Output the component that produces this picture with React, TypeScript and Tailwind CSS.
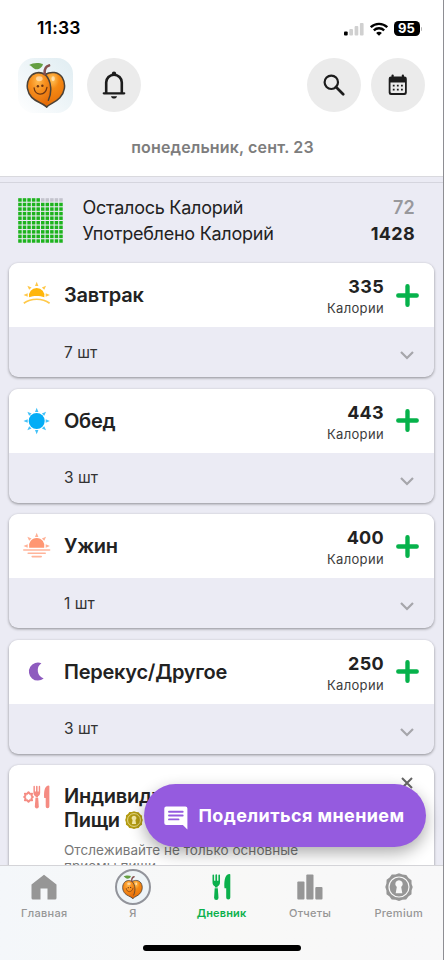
import React from 'react';

type IconProps = { className?: string };

const Peach: React.FC<IconProps> = ({ className }) => (
  <svg viewBox="0 0 42 48" className={className} fill="none">
    <defs>
      <radialGradient id="peachLeft" cx="0.45" cy="0.25" r="0.75">
        <stop offset="0" stopColor="#ffb84d" />
        <stop offset="0.4" stopColor="#f7901e" />
        <stop offset="1" stopColor="#e46a08" />
      </radialGradient>
      <radialGradient id="peachRight" cx="0.5" cy="0.2" r="0.8">
        <stop offset="0" stopColor="#ffc65e" />
        <stop offset="0.35" stopColor="#f58a14" />
        <stop offset="1" stopColor="#e56c06" />
      </radialGradient>
    </defs>
    <path
      d="M20 13C26 9.500 34 10 38 16c4.500 7.500 2.500 16-2.500 21.500C31.500 42 26 43 21.700 47L15 40z"
      fill="url(#peachRight)"
      stroke="#4b4238"
      strokeWidth="1.6"
      strokeLinejoin="round"
    />
    <path
      d="M20 13C13.500 9 6.500 11.500 3.300 17-.5 24 1.500 32 6 37c4.500 4.800 10.500 5.500 15.700 10 .2-2.500.6-4.500 1.800-7 3.500-7 4-20-3.500-27z"
      fill="url(#peachLeft)"
    />
    <path
      d="M23.500 40c3.500-7 4-20-3.500-27C13.500 9 6.500 11.500 3.300 17-.5 24 1.500 32 6 37c4.500 4.800 10.500 5.500 15.700 10"
      stroke="#4b4238"
      strokeWidth="1.6"
      strokeLinecap="round"
      strokeLinejoin="round"
    />
    <path d="M19.500 12.500c-.3-4 .6-8 4.700-9" stroke="#86504e" strokeWidth="2.800" strokeLinecap="round" />
    <path d="M3.300 3C7 .3 14 .2 17.800 2c-.6 3.500-3.500 5.500-6.800 5.500S7 4.500 3.300 3z" fill="#659f42" />
    <ellipse cx="14" cy="17.500" rx="3.500" ry="2.600" fill="#fff" opacity="0.5" />
    <ellipse cx="28.500" cy="17.500" rx="1.800" ry="2.600" fill="#fff" opacity="0.5" />
    <circle cx="12.500" cy="25.300" r="1.300" fill="#703613" />
    <circle cx="17.200" cy="24.900" r="1.300" fill="#703613" />
    <path d="M8.500 27c.8 9 12 8.500 13.500-.5" stroke="#703613" strokeWidth="1.300" strokeLinecap="round" />
  </svg>
);

const RoundButton: React.FC<{ children: React.ReactNode }> = ({ children }) => (
  <button className="flex size-[54px] items-center justify-center rounded-full bg-[#ebebeb] text-[#1c1c1c]">
    {children}
  </button>
);

const StatusBar: React.FC = () => (
  <div className="flex h-[58px] items-center justify-between pr-[21px] pb-px pl-[37px]">
    <span className="text-[17.5px] font-semibold tracking-[0.2px] text-black">11:33</span>
    <div className="flex items-center gap-[6px]">
      <svg width="20" height="14" viewBox="0 0 20 14">
        <rect x="0" y="9.5" width="3.7" height="4" rx="1" fill="#000" />
        <rect x="5.3" y="7" width="3.7" height="6.5" rx="1" fill="#d0d0d0" />
        <rect x="10.6" y="4" width="3.7" height="9.5" rx="1" fill="#d0d0d0" />
        <rect x="15.9" y="1" width="3.7" height="12.5" rx="1" fill="#d0d0d0" />
      </svg>
      <svg width="18" height="14" viewBox="0 0 18 14" fill="none" stroke="#000" strokeWidth="2.3">
        <path d="M.8 5.200c4.600-4.500 11.800-4.500 16.400 0" />
        <path d="M3.800 8.400c3-2.900 7.400-2.900 10.400 0" />
        <path d="M9 13.800l-2.900-2.900c1.500-1.500 4.300-1.500 5.800 0z" fill="#000" stroke="none" />
      </svg>
      <div className="flex items-center gap-px">
        <span className="flex h-[15px] w-[26px] items-center justify-center rounded-[4.5px] bg-black text-[13px] font-bold text-white">
          95
        </span>
        <span className="h-1 w-[1.5px] rounded-r-full bg-[#b5b5b5]" />
      </div>
    </div>
  </div>
);

const Header: React.FC = () => (
  <header className="h-[177px] border-b border-[#d9d9de] bg-white">
    <StatusBar />
    <div className="flex h-[54px] items-center justify-between px-[18px]">
      <div className="flex items-center gap-[14px]">
        <div className="flex size-[55px] items-center justify-center rounded-[16px] bg-gradient-to-bl from-[#e0edf2] via-[#eef5f8] to-white">
          <Peach className="h-[46px] w-[40px]" />
        </div>
        <RoundButton>
          <svg width="24" height="28" viewBox="0 0 24 28" fill="none" stroke="currentColor">
            <path d="M4.200 22V11.500a7.800 7.800 0 0 1 15.600 0V22" strokeWidth="2.6" />
            <path d="M1.800 22.300h20.400" strokeWidth="2.3" strokeLinecap="round" />
            <circle cx="12" cy="2.6" r="2.2" fill="currentColor" stroke="none" />
            <path d="M9 25.200h6c-.4 3.200-5.600 3.200-6 0z" fill="currentColor" stroke="none" />
          </svg>
        </RoundButton>
      </div>
      <div className="flex items-center gap-[10px]">
        <RoundButton>
          <svg width="22" height="22" viewBox="0 0 22 22" fill="none" stroke="currentColor">
            <circle cx="8.3" cy="8.3" r="6.700" strokeWidth="2.2" />
            <path d="M13 13l7.200 7.200" strokeWidth="2.7" strokeLinecap="round" />
          </svg>
        </RoundButton>
        <RoundButton>
          <svg width="20" height="22" viewBox="0 0 20 22" fill="currentColor">
            <rect x="3.5" y="0.5" width="2.2" height="5" rx="1" />
            <rect x="13.8" y="0.5" width="2.2" height="5" rx="1" />
            <path d="M3 2.500h13.500A2.300 2.300 0 0 1 18.800 4.800v13.900a2.300 2.300 0 0 1-2.300 2.300H3A2.300 2.300 0 0 1 .7 18.700V4.800A2.300 2.300 0 0 1 3 2.500z" />
            <path d="M2.500 8.500h14.500v9.200a1.300 1.300 0 0 1-1.300 1.300H3.800a1.300 1.300 0 0 1-1.300-1.300z" fill="#ebebeb" />
            <path d="M4.800 10.800h1.800v1.700h-1.800zM8.900 10.800h1.800v1.700h-1.800zM13 10.800h1.800v1.700h-1.800zM4.800 14.700h1.800v1.700h-1.800zM8.900 14.700h1.800v1.700h-1.800zM13 14.700h1.800v1.700h-1.800z" />
          </svg>
        </RoundButton>
      </div>
    </div>
    <div className="pt-[23px] pl-[2px] text-center text-[16px] leading-6 font-semibold tracking-[0.15px] text-[#7d7d7d]">
      понедельник, сент. 23
    </div>
  </header>
);

const CalorieGrid: React.FC = () => (
  <svg width="45" height="45" viewBox="0 0 45 45">
    {Array.from({ length: 100 }, (_, i) => (
      <rect
        key={i}
        x={(i % 10) * 4.56 + 0.2}
        y={Math.floor(i / 10) * 4.56 + 0.2}
        width="3.5"
        height="3.5"
        fill={i > 4 && i < 10 ? '#c3c3cc' : '#1db31d'}
      />
    ))}
  </svg>
);

const Summary: React.FC = () => (
  <section className="flex h-[80px] items-center border-t border-[#d5d5de] pr-[28px] pb-1 pl-[18px]">
    <CalorieGrid />
    <div className="ml-[19.5px] flex-1 text-[18px] leading-[26px] text-[#222]">
      <div className="flex justify-between">
        <span className="tracking-[-0.25px]">Осталось Калорий</span>
        <span className="font-semibold tracking-[0.2px] text-[#98989c]">72</span>
      </div>
      <div className="flex justify-between">
        <span className="tracking-[-0.25px]">Употреблено Калорий</span>
        <span className="font-bold tracking-[0.3px]">1428</span>
      </div>
    </div>
  </section>
);

// triangular ray pointing outwards, rotated around the sun centre
const Rays: React.FC<{ angles: number[] }> = ({ angles }) => (
  <g opacity="0.75">
    {angles.map((a) => (
      <path key={a} d="M13.700 .8l1.700 4.200h-3.400z" transform={`rotate(${a} 13.7 14)`} />
    ))}
  </g>
);

const SunriseIcon: React.FC = () => (
  <svg width="28" height="28" viewBox="0 0 28 28" fill="#ffb60a">
    <Rays angles={[-90, -45, 0, 45, 90]} />
    <path d="M6.100 16.200a7.750 7.750 0 1 1 15.200 0c-4.500-1.700-10.700-1.700-15.200 0z" />
    <path d="M.8 22.300c7.300-5.400 18.500-5.400 25.800 0" fill="none" stroke="#ffc94a" strokeWidth="1.7" />
  </svg>
);

const SunIcon: React.FC = () => (
  <svg width="28" height="28" viewBox="0 0 28 28" fill="#03adf6">
    <Rays angles={[0, 45, 90, 135, 180, 225, 270, 315]} />
    <circle cx="13.7" cy="14" r="8" />
  </svg>
);

const SunsetIcon: React.FC = () => (
  <svg width="28" height="28" viewBox="0 0 28 28" fill="#ff9672">
    <Rays angles={[-90, -45, 0, 45, 90]} />
    <path d="M6.200 15.800a7.750 7.750 0 1 1 15 0z" />
    <path d="M.8 18h25.800M5.200 21.300h17M9.200 24.600h9" fill="none" stroke="#ffb49a" strokeWidth="1.6" strokeLinecap="round" />
  </svg>
);

const MoonIcon: React.FC = () => (
  <svg width="28" height="28" viewBox="0 0 28 28" fill="#8e5bbf">
    <path d="M18.400 5.300A9 9 0 1 0 20.700 20.500A8.600 8.600 0 0 1 18.400 5.300z" />
  </svg>
);

const Utensils: React.FC<IconProps> = ({ className }) => (
  <svg width="19" height="26" viewBox="0 0 19 26" className={className} fill="currentColor">
    <path d="M.5 1.200a.8.800 0 0 1 1.600 0v5.600h1.300V1.200a.85.850 0 0 1 1.700 0v5.600h1.300V1.200a.8.800 0 0 1 1.600 0v7c0 2.200-.9 3.400-2.400 4v1.300H2.900v-1.300C1.400 11.600.5 10.400.5 8.200z" />
    <path d="M2.700 14.200h3.100l.7 9.500a2 2 0 0 1-4.400 0z" />
    <path d="M18.300.7v22.800a2 2 0 0 1-4.100 0v-9.300h-1.700c-.5-6 .1-13.600 4.600-14.100.7 0 1.200.2 1.200.6z" />
  </svg>
);

const CustomMealIcon: React.FC = () => (
  <div className="flex w-7 items-center text-[#f58b82]">
    <svg width="11" height="12" viewBox="0 0 11 12" className="shrink-0" fill="none" stroke="currentColor">
      <path d="M5.500 1.200l1.400 1.700 2.200-.3-.6 2.100 1.300 1.300-1.300 1.300.6 2.100-2.200-.3-1.400 1.700-1.400-1.700-2.200.3.600-2.100L1.200 6l1.300-1.300-.6-2.100 2.200.3z" strokeWidth="1.9" strokeLinejoin="round" />
    </svg>
    <Utensils className="-ml-px h-[26px] w-[17px] shrink-0" />
  </div>
);

const SealIcon: React.FC<{ size: number; ring: string }> = ({ size, ring }) => (
  <svg width={size} height={size} viewBox="0 0 28 28" fill="currentColor">
    <path d="M14 .3l3.500 1.300 3.800.3 2.200 3.100 3 2.300.1 3.800 1.100 2.900-1.100 3.600-.1 3.700-3.100 2.200-2.200 3-3.700.2-3.500 1.300-3.500-1.300-3.800-.3-2.200-3-3-2.200-.1-3.700L.3 14l1.100-3.600.2-3.600 3-2.200 2.200-3 3.700-.1z" />
    <circle cx="14" cy="14" r="10" fill="none" stroke={ring} strokeWidth="1.2" />
    <path d="M14 7.200a3.700 3.700 0 0 1 2.200 6.700l1.100 6.300h-6.600l1.100-6.300A3.700 3.700 0 0 1 14 7.200z" fill={ring} />
  </svg>
);

type Meal = { title: string; kcal: number; count: number; icon: React.ReactNode };

const meals: Meal[] = [
  { title: 'Завтрак', kcal: 335, count: 7, icon: <SunriseIcon /> },
  { title: 'Обед', kcal: 443, count: 3, icon: <SunIcon /> },
  { title: 'Ужин', kcal: 400, count: 1, icon: <SunsetIcon /> },
  { title: 'Перекус/Другое', kcal: 250, count: 3, icon: <MoonIcon /> },
];

const MealCard: React.FC<{ meal: Meal }> = ({ meal }) => (
  <article className="overflow-hidden rounded-[9px] bg-[#ebebf4] shadow-[0_1px_3px_rgba(0,0,0,0.4)]">
    <div className="flex h-16 items-center bg-white pr-[15px] pl-[14px]">
      {meal.icon}
      <h2 className="ml-[13px] flex-1 text-[20px] font-semibold tracking-[-0.25px] text-[#222]">{meal.title}</h2>
      <div className="mr-3 pt-[5px] text-right">
        <div className="text-[18px] leading-[21px] font-bold tracking-[0.3px] text-[#222]">{meal.kcal}</div>
        <div className="text-[13px] leading-[22px] tracking-[0.35px] text-[#3c3c3c]">Калории</div>
      </div>
      <svg width="23" height="23" viewBox="0 0 23 23" stroke="#06b24b" strokeWidth="4.4" strokeLinecap="round">
        <path d="M11.500 2.300v18.400M2.300 11.500h18.400" />
      </svg>
    </div>
    <div className="flex h-[50px] items-center justify-between pt-px pr-[20.5px] pl-[55px]">
      <span className="text-[15.5px] text-[#333]">{meal.count} шт</span>
      <svg width="14" height="9" viewBox="0 0 14 9" className="mt-1.5" fill="none" stroke="#a6a6ab" strokeWidth="2.2">
        <path d="M1 1l6 6 6-6" />
      </svg>
    </div>
  </article>
);

const CustomMealsCard: React.FC = () => (
  <article className="flex h-[160px] rounded-[9px] bg-white pt-[19px] pr-[21px] pl-[14px] shadow-[0_1px_3px_rgba(0,0,0,0.4)]">
    <div className="w-7">
      <CustomMealIcon />
    </div>
    <div className="ml-[13px] flex-1">
      <h2 className="text-[20px] leading-6 font-semibold tracking-[-0.25px] text-[#222]">
        Индивидуальные
        <span className="flex items-center gap-[5px] text-[#b39b12]">
          <span className="text-[#222]">Пищи</span>
          <SealIcon size={18} ring="#f5eaa8" />
        </span>
      </h2>
      <p className="mt-[10px] w-[250px] text-[13.5px] leading-4 tracking-[0.05px] text-[#777]">
        Отслеживайте не только основные приемы пищи
      </p>
    </div>
    <svg width="12" height="12" viewBox="0 0 12 12" className="-mt-[7px]" fill="none" stroke="#666" strokeWidth="2">
      <path d="M1 1l10 10M11 1L1 11" />
    </svg>
  </article>
);

const FeedbackButton: React.FC = () => (
  <button className="absolute top-[783.5px] left-[143.5px] flex h-[63.5px] w-[282px] items-center rounded-full bg-[#955bdf] pl-5 text-white shadow-[0_6px_16px_rgba(0,0,0,0.32)]">
    <svg width="24" height="24" viewBox="0 0 24 24" className="mt-1.5" fill="currentColor">
      <path d="M2.300.5h19.100a2 2 0 0 1 2 2V23.500l-4.500-4.500H2.300a2 2 0 0 1-2-2V2.500a2 2 0 0 1 2-2z" />
      <path d="M5 5.700h13.700M5 9.500h13.700M5 13.400h9.500" stroke="#955bdf" strokeWidth="1.9" strokeLinecap="round" />
    </svg>
    <span className="ml-[11px] text-[18px] font-bold tracking-[0.4px] whitespace-nowrap">Поделиться мнением</span>
  </button>
);

const tabs = [
  {
    label: 'Главная',
    icon: (
      <svg width="26" height="26" viewBox="0 0 26 26" fill="currentColor">
        <path d="M13 .8l12.500 9.700V24a1.500 1.500 0 0 1-1.500 1.500h-7.500v-11h-7v11H2A1.500 1.500 0 0 1 .5 24V10.500z" />
      </svg>
    ),
  },
  {
    label: 'Я',
    icon: (
      <span className="flex size-9 shrink-0 items-center justify-center rounded-full border-2 border-[#92949b] bg-[#eef4f7]">
        <Peach className="h-[24px] w-[21px]" />
      </span>
    ),
  },
  { label: 'Дневник', icon: <Utensils />, active: true },
  {
    label: 'Отчеты',
    icon: (
      <svg width="26" height="26" viewBox="0 0 26 26" fill="currentColor">
        <rect x="0.3" y="7.5" width="7.2" height="18" rx="1" />
        <rect x="9.3" y="0.5" width="7.2" height="25" rx="1" />
        <rect x="18.3" y="13" width="7.2" height="12.5" rx="1" />
      </svg>
    ),
  },
  { label: 'Premium', icon: <SealIcon size={28} ring="#f8f8f8" /> },
];

const TabBar: React.FC = () => (
  <nav className="absolute inset-x-0 bottom-0 flex h-[95px] flex-col items-center border-t border-[#d4d4d8] bg-gradient-to-r from-[#f4f7fa] via-[#f8f8f7] to-[#f8f8f9]">
    <div className="flex w-full">
      {tabs.map((tab) => (
        <div
          key={tab.label}
          className={`flex flex-1 flex-col items-center ${tab.active ? 'text-[#0bb04c]' : 'text-[#969696]'}`}
        >
          <div className="mt-[3px] flex h-9 items-center justify-center">{tab.icon}</div>
          <span
            className={`text-[11px] leading-4 ${tab.active ? 'font-semibold tracking-[0.15px]' : 'font-medium tracking-[0.3px]'}`}
          >
            {tab.label}
          </span>
        </div>
      ))}
    </div>
    <div className="mt-6 h-[5.5px] w-[158px] rounded-full bg-black" />
  </nav>
);

const App: React.FC = () => {
  return (
    <div className="relative h-[960px] w-[444px] overflow-hidden border-r border-[#8e8e93] bg-[#ebebf4] font-['Inter',sans-serif]">
      <Header />
      <div className="h-[5px]" />
      <Summary />
      <main className="flex flex-col gap-[11.5px] px-[9px] pt-px">
        {meals.map((meal) => (
          <MealCard key={meal.title} meal={meal} />
        ))}
        <CustomMealsCard />
      </main>
      <FeedbackButton />
      <TabBar />
    </div>
  );
};

export default App;
